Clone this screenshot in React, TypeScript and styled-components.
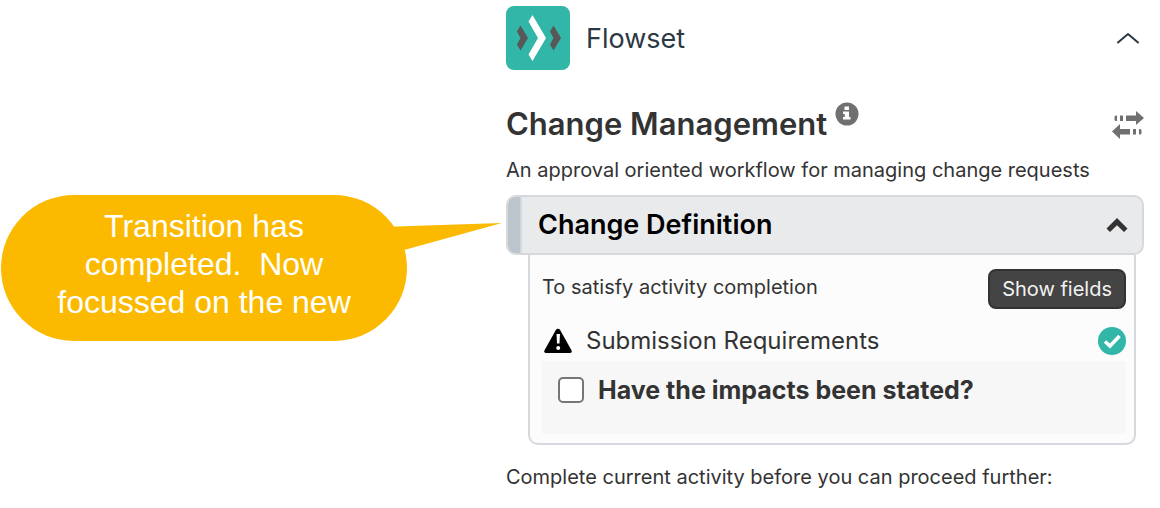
import React, { useState } from "react";
import styled, { createGlobalStyle } from "styled-components";

const GlobalStyle = createGlobalStyle`
  *, *::before, *::after { box-sizing: border-box; }
  body {
    margin: 0;
    background: #ffffff;
    color: #333333;
    font-family: Inter, "Liberation Sans", sans-serif;
    font-size: 20px;
    line-height: 24px;
  }
  h1, h2, p { margin: 0; }
`;

const Page = styled.div`
  display: grid;
  grid-template-columns: 506fr 638fr;
  padding: 6px 16px 16px 0;
`;

const Notes = styled.aside`
  padding: 189px 99px 0 1px;
`;

const Callout = styled.div`
  position: relative;
  height: 146px;
  padding: 12px 20px;
  border-radius: 73px;
  background: #fbba00;
  color: #ffffff;
  font-family: "Liberation Sans", Arial, sans-serif;
  font-size: 32px;
  line-height: 38px;
  text-align: center;
  white-space: pre-line;
`;

const CalloutTail = styled.svg`
  position: absolute;
  top: 26px;
  left: calc(100% - 26px);
`;

const Panel = styled.main`
  min-width: 0;
`;

const AppHeader = styled.header`
  display: flex;
  align-items: center;
  gap: 16px;
  padding-bottom: 32px;
`;

const AppName = styled.span`
  flex: 1;
  color: #2c3844;
  font-size: 27px;
  line-height: 32px;
  padding-top: 2px;
`;

const IconButton = styled.button`
  display: flex;
  padding: 0;
  border: 0;
  background: none;
  color: inherit;
  cursor: pointer;
`;

const TitleRow = styled.div`
  display: flex;
  align-items: flex-start;
  gap: 8px;
  height: 56px;
`;

const Title = styled.h1`
  font-size: 31px;
  line-height: 44px;
  font-weight: 600;
`;

const SwapButton = styled(IconButton)`
  margin: 9px 0 0 auto;
`;

const Description = styled.p`
  margin-bottom: 13px;
`;

const ActivityHeader = styled.div`
  display: flex;
  align-items: center;
  justify-content: space-between;
  height: 60px;
  padding-right: 14px;
  border: 2px solid #d5d9dd;
  border-radius: 10px;
  background: #e9eaec;
  overflow: hidden;
`;

const ActivityMarker = styled.span`
  align-self: stretch;
  width: 14px;
  margin-right: 16px;
  border-right: 2px solid #d5d9dd;
  background: #bdc5cc;
`;

const ActivityName = styled.h2`
  flex: 1;
  color: #000000;
  font-size: 27px;
  line-height: 32px;
  font-weight: 600;
`;

const ActivityBody = styled.section`
  margin: 0 8px 0 22px;
  padding: 14px 8px 9px 12px;
  border: 2px solid #d5d9dd;
  border-top: 0;
  border-radius: 0 0 10px 10px;
  background: #fcfcfc;
`;

const CompletionRow = styled.div`
  display: flex;
  justify-content: space-between;
  align-items: flex-start;
  padding-bottom: 12px;
`;

const CompletionText = styled.p`
  padding-top: 6px;
`;

const FieldsButton = styled.button`
  height: 40px;
  padding: 0 12px;
  border: 2px solid #333333;
  border-radius: 8px;
  background: #444444;
  color: #f2f2f2;
  font: inherit;
  cursor: pointer;
`;

const RequirementRow = styled.div`
  display: flex;
  align-items: center;
  gap: 14px;
  height: 40px;
  padding-left: 2px;
`;

const RequirementName = styled.span`
  flex: 1;
  font-size: 24px;
  line-height: 32px;
`;

const CheckList = styled.div`
  height: 73px;
  padding: 13px 16px;
  background: #f7f7f7;
`;

const CheckLabel = styled.label`
  display: flex;
  align-items: center;
  gap: 14px;
  font-size: 25px;
  line-height: 32px;
  font-weight: 700;
`;

const Checkbox = styled.input`
  appearance: none;
  width: 26px;
  height: 26px;
  margin: 0;
  border: 2px solid #767676;
  border-radius: 5px;
  background: #ffffff;

  &:checked {
    background: #32b6a8;
  }
`;

const Footnote = styled.p`
  padding-top: 20px;
`;

const Logo = () => (
  <svg width="64" height="64" viewBox="0 0 64 64" aria-hidden="true">
    <rect width="64" height="64" rx="8" fill="#32b6a8" />
    <path d="M14.5 19.5 22 32l-7.500 12.500-3.500-6L14.500 32 11 25.500z" fill="#585858" />
    <path d="M26.500 9 40 32 26.500 55 22.500 48.500 32 32 22.500 15.500z" fill="#ffffff" />
    <path d="M47.500 19.500 55 32l-7.500 12.500-3.500-6L47.500 32 44 25.500z" fill="#585858" />
  </svg>
);

const ThinChevron = () => (
  <svg width="32" height="32" viewBox="0 0 32 32" fill="none" aria-hidden="true">
    <path d="M6 20.500 16 12 26 20.500" stroke="#2c3844" strokeWidth="2" strokeLinecap="round" strokeLinejoin="round" />
  </svg>
);

const InfoIcon = () => (
  <svg width="24" height="24" viewBox="0 0 24 24" aria-hidden="true">
    <circle cx="12" cy="12" r="11.500" fill="#707070" />
    <path d="M9.500 4.500h4.500v3.500H9.500zM8 9.500h6v5.500h1.500v2.500H8v-2.500h1.700v-3H8z" fill="#ffffff" />
  </svg>
);

const SwapIcon = () => (
  <svg width="32" height="28" viewBox="0 0 32 28" fill="#707070" aria-hidden="true">
    <path d="M14 4.500h10V0l8 7-8 7V10H14zM8 4.500h3V10H8zM5 4.500V10H4a1.500 1.500 0 0 1-1.500-1.500V6A1.500 1.500 0 0 1 4 4.500z" />
    <path d="M18 18H8v-5l-8 7.500L8 28v-4.500h10zM21 18h3v5.500h-3zM27 18v5.500h1a1.500 1.500 0 0 0 1.500-1.500v-2.500A1.500 1.500 0 0 0 28 18z" />
  </svg>
);

const BoldChevron = () => (
  <svg width="22" height="16" viewBox="0 0 22 16" fill="#333333" aria-hidden="true">
    <path d="M11 1 21.500 11.500 18 15 11 8.200 4 15 .5 11.500z" />
  </svg>
);

const WarningIcon = () => (
  <svg width="28" height="26" viewBox="0 0 28 26" aria-hidden="true">
    <path d="M12 1.800a2.300 2.300 0 0 1 4 0L27.600 22.500A1.700 1.700 0 0 1 26 25H2A1.700 1.700 0 0 1 .4 22.500z" fill="#000000" />
    <path d="M12.500 6h3.500l-.5 9.500h-2.500z" fill="#ffffff" />
    <circle cx="14.200" cy="20" r="2" fill="#ffffff" />
  </svg>
);

const DoneIcon = () => (
  <svg width="28" height="28" viewBox="0 0 28 28" fill="none" role="img" aria-label="Completed">
    <circle cx="14" cy="14" r="14" fill="#32b6a8" />
    <path d="M7 14.500 12 19 21.500 9" stroke="#ffffff" strokeWidth="3.500" />
  </svg>
);

export default function App() {
  const [expanded, setExpanded] = useState(true);
  const [stated, setStated] = useState(false);

  return (
    <>
      <GlobalStyle />
      <Page>
        <Notes>
          <Callout>
            {"Transition has\ncompleted. \u00a0Now\nfocussed on the new"}
            <CalloutTail width="122" height="50" viewBox="0 0 122 50" fill="#fbba00" aria-hidden="true">
              <path d="M0 6 121 2 23 29 0 32z" />
            </CalloutTail>
          </Callout>
        </Notes>
        <Panel>
          <AppHeader>
            <Logo />
            <AppName>Flowset</AppName>
            <IconButton type="button" aria-label="Collapse Flowset">
              <ThinChevron />
            </IconButton>
          </AppHeader>
          <TitleRow>
            <Title>Change Management</Title>
            <IconButton type="button" aria-label="About this workflow">
              <InfoIcon />
            </IconButton>
            <SwapButton type="button" aria-label="Switch workflow">
              <SwapIcon />
            </SwapButton>
          </TitleRow>
          <Description>An approval oriented workflow for managing change requests</Description>
          <ActivityHeader>
            <ActivityMarker />
            <ActivityName>Change Definition</ActivityName>
            <IconButton
              type="button"
              aria-label="Toggle Change Definition"
              aria-expanded={expanded}
              onClick={() => setExpanded(!expanded)}
            >
              <BoldChevron />
            </IconButton>
          </ActivityHeader>
          {expanded && (
            <ActivityBody>
              <CompletionRow>
                <CompletionText>To satisfy activity completion</CompletionText>
                <FieldsButton type="button">Show fields</FieldsButton>
              </CompletionRow>
              <RequirementRow>
                <WarningIcon />
                <RequirementName>Submission Requirements</RequirementName>
                <DoneIcon />
              </RequirementRow>
              <CheckList>
                <CheckLabel>
                  <Checkbox
                    type="checkbox"
                    checked={stated}
                    onChange={(event) => setStated(event.target.checked)}
                  />
                  Have the impacts been stated?
                </CheckLabel>
              </CheckList>
            </ActivityBody>
          )}
          <Footnote>Complete current activity before you can proceed further:</Footnote>
        </Panel>
      </Page>
    </>
  );
}
